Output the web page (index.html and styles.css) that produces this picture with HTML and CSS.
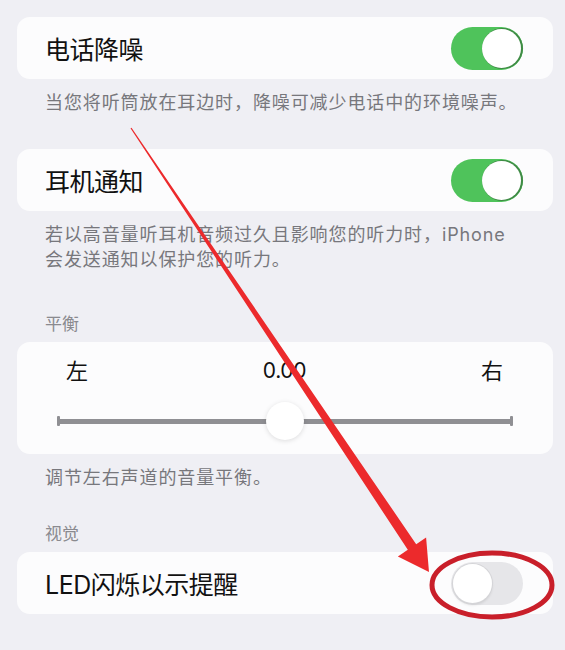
FILE: index.html
```html
<!DOCTYPE html>
<html lang="zh-CN">
<head>
  <meta charset="UTF-8" />
  <meta name="viewport" content="width=device-width, initial-scale=1" />
  <title>音频/视觉</title>
  <link rel="stylesheet" href="styles.css">
</head>
<body>
  <div class="page">
    <div class="card row">
      <span class="title">电话降噪</span>
      <span class="switch on"><span class="knob"></span></span>
    </div>
    <p class="note">当您将听筒放在耳边时，降噪可减少电话中的环境噪声。</p>

    <div class="card row card-gap">
      <span class="title">耳机通知</span>
      <span class="switch on"><span class="knob"></span></span>
    </div>
    <p class="note">若以高音量听耳机音频过久且影响您的听力时，iPhone<br>会发送通知以保护您的听力。</p>

    <h2 class="section">平衡</h2>
    <div class="card balance">
      <div class="labels">
        <span>左</span>
        <span class="value">0.00</span>
        <span>右</span>
      </div>
      <div class="slider">
        <span class="tick"></span>
        <span class="track"></span>
        <span class="tick"></span>
        <span class="thumb"></span>
      </div>
    </div>
    <p class="note">调节左右声道的音量平衡。</p>

    <h2 class="section near">视觉</h2>
    <div class="card row">
      <span class="title">LED闪烁以示提醒</span>
      <span class="switch"><span class="knob"></span></span>
    </div>
  </div>

  <!-- 标注：箭头和圈 -->
  <svg class="marks" width="565" height="650" viewBox="0 0 565 650">
    <polygon fill="#ec2a2c" points="131.5,127.7 416.2,544.2 426.1,537.5 429,572 397.9,556.5 407.8,549.8 130.5,128.3" />
    <ellipse cx="492" cy="585" rx="60" ry="32" fill="none" stroke="#c91f2a" stroke-width="5" />
  </svg>
</body>
</html>
```

FILE: styles.css
```css
body {
  margin: 0;
  background: #efeff4;
  font-family: "Inter", "Noto Sans CJK SC", sans-serif;
  color: #111;
  position: relative;
  width: 565px;
  height: 650px;
  overflow: hidden;
}
.page {
  padding: 17px 12px 0 17px;
}
.card {
  background: #fcfcfd;
  border-radius: 13px;
}
.row {
  height: 62px;
  display: flex;
  align-items: center;
  justify-content: space-between;
  padding: 0 30px 0 28px;
}
.card-gap {
  margin-top: 34px;
}
.title {
  font-size: 25px;
  letter-spacing: -0.5px;
}
.note {
  margin: 11px 0 0 28px;
  font-size: 18px;
  line-height: 25px;
  color: #77777c;
  letter-spacing: 0.9px;
}
.section {
  margin: 41px 0 7px 28px;
  font-size: 17px;
  line-height: 22px;
  font-weight: normal;
  color: #8a8a8f;
}
.section.near {
  margin-top: 33px;
}

/* 开关 */
.switch {
  width: 72px;
  height: 43px;
  border-radius: 22px;
  background: #e6e6e9;
  display: flex;
  align-items: center;
  padding: 2px;
  box-sizing: border-box;
}
.switch .knob {
  width: 39px;
  height: 39px;
  border-radius: 50%;
  background: #fff;
  box-shadow: 0 0 0 1px #d5d5d8, 0 2px 3px rgba(0, 0, 0, 0.12);
}
.switch.on {
  background: #4fc35b;
  justify-content: flex-end;
}
.switch.on .knob {
  box-shadow: 1px 0 0 1px #3f8a45;
}

/* 平衡滑块 */
.balance {
  height: 112px;
  padding: 0 40px;
  box-sizing: border-box;
}
.labels {
  display: flex;
  justify-content: space-between;
  padding: 14px 10px 0 9px;
  font-size: 22px;
  line-height: 30px;
}
.labels .value {
  font-size: 21px;
  letter-spacing: -0.3px;
}
.slider {
  position: relative;
  display: flex;
  align-items: center;
  height: 40px;
  margin-top: 15px;
}
.track {
  flex: 1;
  height: 5px;
  background: #8f8f93;
}
.tick {
  width: 3px;
  height: 10px;
  background: #8f8f93;
  border-radius: 1px;
}
.thumb {
  position: absolute;
  left: 50%;
  top: 1px;
  width: 38px;
  height: 38px;
  margin-left: -19px;
  border-radius: 50%;
  background: #fff;
  box-shadow: 0 1px 5px rgba(0, 0, 0, 0.13);
}

.marks {
  position: absolute;
  left: 0;
  top: 0;
  pointer-events: none;
}
```
